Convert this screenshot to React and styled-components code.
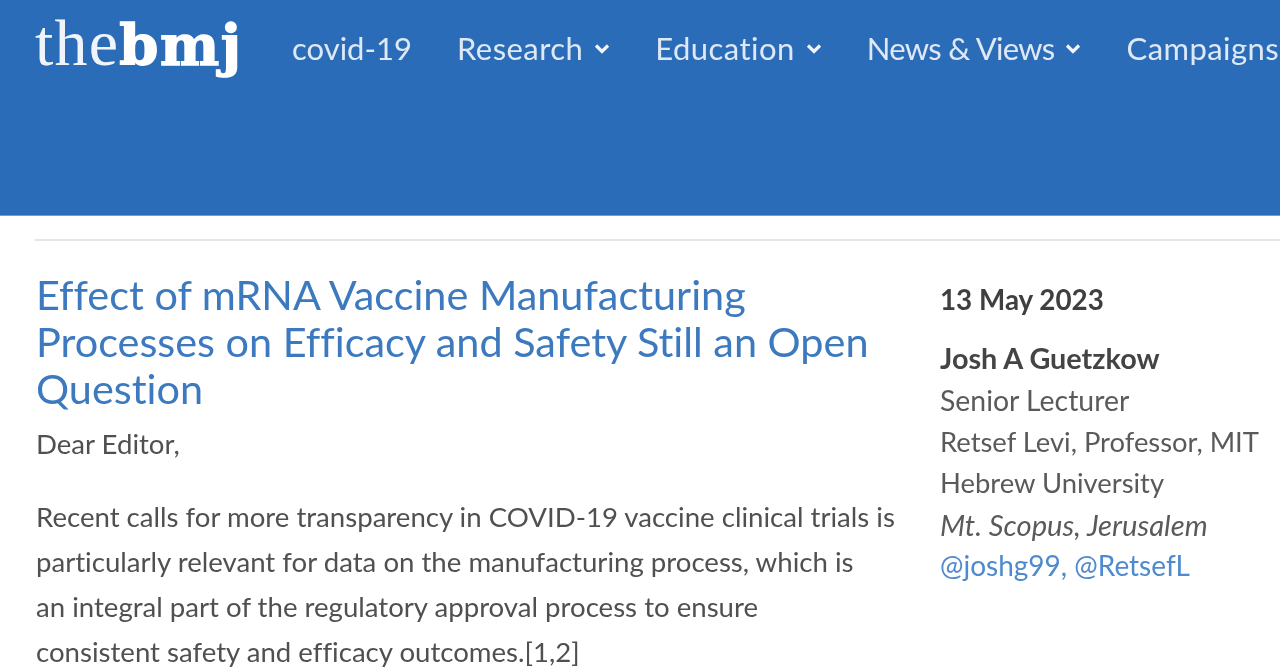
import React from "react";
import styled, { createGlobalStyle } from "styled-components";

const Global = createGlobalStyle`
  html, body { margin: 0; padding: 0; background: #fff; overflow: hidden; }
  body { font-family: Lato, "Noto Sans", sans-serif; font-variant-ligatures: none; }
`;
const Page = styled.div`
  width: 1280px; height: 670px; overflow: hidden; background: #fff;
  filter: blur(0.45px);
`;
const Header = styled.header`
  height: 216px; box-sizing: border-box; background: #2b6cb9;
  border-bottom: 1px solid #6f9fd6;
  display: flex; align-items: flex-start; padding: 12px 0 0 35px; white-space: nowrap;
`;
const Logo = styled.div`
  width: 207px; height: 70px; line-height: 62px; color: #fff; flex: none;
  font-family: "Liberation Serif", serif;
`;
const LogoThe = styled.span`font-size: 66px; letter-spacing: 1.2px; font-weight: 400; color: #f0f5fb;`;
const LogoBmj = styled.span`
  font-family: "DejaVu Serif", serif; font-weight: 700; font-size: 56px; letter-spacing: 1.6px;
  -webkit-text-stroke: 1.5px #fff;
`;
const Nav = styled.nav`
  display: flex; align-items: center; gap: 45px; margin-left: 50px; height: 72px;
`;
const NavItem = styled.a`
  display: flex; align-items: center; gap: 11px;
  font-size: 31px; color: #dfe9f6; line-height: 1;
  letter-spacing: ${p => p.$track || 0}px;
`;
const Chevron = () => (
  <svg width="16" height="11" viewBox="0 0 16 11" fill="none" stroke="#f2f6fb" strokeWidth="3.2">
    <path d="M2 2.5 8 8.5 14 2.5" />
  </svg>
);
const Rule = styled.div`height: 2px; background: #e6e6e6; margin: 23px 0 0 35px;`;
const Content = styled.main`
  display: grid; grid-template-columns: 904px 1fr; padding: 30px 0 0 36px;
`;
const Title = styled.h1`
  margin: 0; width: 860px; font-size: 41.4px; line-height: 47px; font-weight: 400; color: #3c79bf;
`;
const Body = styled.p`
  margin: ${p => p.$top}px 0 0; font-size: 27.6px; line-height: 45px; color: #505050; white-space: nowrap;
`;
const Side = styled.aside`
  font-size: 27.4px; line-height: 41px; color: #5a5a5a; white-space: nowrap; padding-top: 6px;
`;
const DateLine = styled.div`font-size: 27.8px; font-weight: 700; color: #3f3f3f; margin-bottom: 15px; line-height: 46px;`;
const Name = styled.div`font-size: 28.8px; font-weight: 700; color: #444; line-height: 41px;`;
const Role = styled.div`font-size: 28.4px; line-height: 42px;`;
const Italic = styled.div`font-size: 29.2px; font-style: italic; margin-top: 1px;`;
const Handle = styled.div`font-size: 28px; color: #4e8ad0;`;

export default function App() {
  return (
    <Page>
      <Global />
      <Header>
        <Logo><LogoThe>the</LogoThe><LogoBmj>bmj</LogoBmj></Logo>
        <Nav>
          <NavItem>covid-19</NavItem>
          <NavItem $track={0.45}>Research <Chevron /></NavItem>
          <NavItem $track={0.45}>Education <Chevron /></NavItem>
          <NavItem $track={-0.7}>News &amp; Views <Chevron /></NavItem>
          <NavItem $track={0.45}>Campaigns</NavItem>
        </Nav>
      </Header>
      <Rule />
      <Content>
        <div>
          <Title>Effect of mRNA Vaccine Manufacturing Processes on Efficacy and Safety Still an Open Question</Title>
          <Body $top={9}>Dear Editor,</Body>
          <Body $top={28}>
            Recent calls for more transparency in COVID-19 vaccine clinical trials is<br />
            particularly relevant for data on the manufacturing process, which is<br />
            an integral part of the regulatory approval process to ensure<br />
            consistent safety and efficacy outcomes.[1,2]
          </Body>
        </div>
        <Side>
          <DateLine>13 May 2023</DateLine>
          <Name>Josh A Guetzkow</Name>
          <Role>Senior Lecturer</Role>
          <div>Retsef Levi, Professor, MIT</div>
          <div>Hebrew University</div>
          <Italic>Mt. Scopus, Jerusalem</Italic>
          <Handle>@joshg99, @RetsefL</Handle>
        </Side>
      </Content>
    </Page>
  );
}
